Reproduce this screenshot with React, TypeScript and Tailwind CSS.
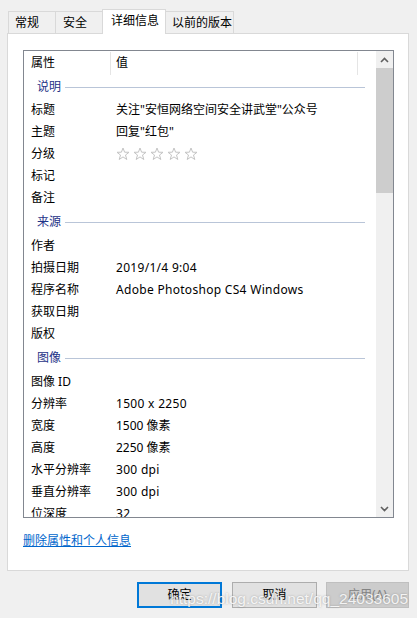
import React from 'react';

type Row =
  | { type: 'section'; label: string; h: string }
  | { type: 'item'; label: string; value?: string; stars?: boolean };

const rows: Row[] = [
  { type: 'section', label: '说明', h: 'h-[24px]' },
  { type: 'item', label: '标题', value: '关注"安恒网络空间安全讲武堂"公众号' },
  { type: 'item', label: '主题', value: '回复"红包"' },
  { type: 'item', label: '分级', stars: true },
  { type: 'item', label: '标记' },
  { type: 'item', label: '备注' },
  { type: 'section', label: '来源', h: 'h-[26px]' },
  { type: 'item', label: '作者' },
  { type: 'item', label: '拍摄日期', value: '2019/1/4 9:04' },
  { type: 'item', label: '程序名称', value: 'Adobe Photoshop CS4 Windows' },
  { type: 'item', label: '获取日期' },
  { type: 'item', label: '版权' },
  { type: 'section', label: '图像', h: 'h-[26px]' },
  { type: 'item', label: '图像 ID' },
  { type: 'item', label: '分辨率', value: '1500 x 2250' },
  { type: 'item', label: '宽度', value: '1500 像素' },
  { type: 'item', label: '高度', value: '2250 像素' },
  { type: 'item', label: '水平分辨率', value: '300 dpi' },
  { type: 'item', label: '垂直分辨率', value: '300 dpi' },
  { type: 'item', label: '位深度', value: '32' },
];

function Star() {
  return (
    <svg width="14" height="14" viewBox="0 0 14 14" className="shrink-0">
      <polygon
        points="7,1 8.6,5.2 13,5.3 9.5,8 10.8,12.5 7,9.9 3.2,12.5 4.5,8 1,5.3 5.4,5.2"
        fill="none"
        stroke="#c4c4c4"
        strokeWidth="1"
      />
    </svg>
  );
}

function Chevron({ up }: { up?: boolean }) {
  return (
    <svg width="9" height="6" viewBox="0 0 9 6">
      <polyline
        points={up ? '1,5 4.5,1.5 8,5' : '1,1 4.5,4.5 8,1'}
        fill="none"
        stroke="#606060"
        strokeWidth="1.6"
      />
    </svg>
  );
}

export default function App() {
  return (
    <div className="relative h-[618px] w-[417px] overflow-hidden bg-[#f0f0f0] px-[7px] pt-[9px] font-['Noto_Sans','Noto_Sans_CJK_SC',sans-serif] text-[12px] text-black">
      {/* tabs */}
      <div className="ml-[1px] flex h-[24px] items-end">
        <div className="h-[22px] w-[48px] border-x border-t border-[#d9d9d9] pl-[6px] leading-[21px]">常规</div>
        <div className="-ml-px h-[22px] w-[48px] border-x border-t border-[#d9d9d9] pl-[7px] leading-[21px]">安全</div>
        <div className="relative z-10 -mb-px -ml-px h-[25px] w-[64px] border-x border-t border-[#d9d9d9] bg-white pl-[8px] leading-[21px]">
          详细信息
        </div>
        <div className="-ml-px h-[22px] w-[69px] border-x border-t border-[#d9d9d9] pl-[6px] leading-[21px]">以前的版本</div>
      </div>

      {/* panel */}
      <div className="h-[538px] w-[402px] border border-[#d9d9d9] bg-white px-[15px] pt-[16px]">
        <div className="flex h-[468px] w-[371px] border border-[#828790]">
          <div className="h-full flex-1 overflow-hidden">
            <div className="flex h-[24px] items-center">
              <div className="w-[86px] pl-[7px]">属性</div>
              <div className="h-[23px] w-px bg-[#e5e5e5]" />
              <div className="w-[246px] pl-[5px]">值</div>
              <div className="h-[23px] w-px bg-[#e5e5e5]" />
            </div>
            {rows.map((r, i) =>
              r.type === 'section' ? (
                <div key={i} className={`flex ${r.h} items-center pl-[13px] pr-[11px]`}>
                  <span className="text-[#1e3287]">{r.label}</span>
                  <div className="ml-[4px] h-px flex-1 bg-[#b9c5d8]" />
                </div>
              ) : (
                <div key={i} className="flex h-[22px] items-center whitespace-nowrap">
                  <div className="w-[92px] pl-[7px]">{r.label}</div>
                  {r.stars ? (
                    <div className="flex gap-[3px]">
                      <Star />
                      <Star />
                      <Star />
                      <Star />
                      <Star />
                    </div>
                  ) : (
                    <div className={r.value && /^[\x00-\x7F]+$/.test(r.value) ? 'tracking-[0.3px]' : ''}>{r.value}</div>
                  )}
                </div>
              ),
            )}
          </div>
          {/* scrollbar */}
          <div className="flex h-full w-[17px] flex-col bg-[#f0f0f0]">
            <div className="flex h-[17px] items-center justify-center">
              <Chevron up />
            </div>
            <div className="h-[125px] bg-[#cdcdcd]" />
            <div className="flex-1" />
            <div className="flex h-[17px] items-center justify-center">
              <Chevron />
            </div>
          </div>
        </div>

        <div className="mt-[15px] leading-[16px]">
          <a className="text-[#0066cc] underline">删除属性和个人信息</a>
        </div>
      </div>

      {/* buttons */}
      <div className="mt-[11px] flex justify-end pr-px">
        <button className="h-[26px] w-[85px] border-2 border-[#0078d7] bg-[#e1e1e1]">确定</button>
        <button className="ml-[10px] h-[26px] w-[85px] border border-[#adadad] bg-[#e1e1e1]">取消</button>
        <button className="ml-[9px] h-[26px] w-[83px] border border-[#bfbfbf] bg-[#cccccc] text-[#838383]">应用(A)</button>
      </div>

      {/* watermark */}
      <div className="pointer-events-none absolute bottom-[8px] right-[9px] font-['Liberation_Sans',sans-serif] text-[15.5px] text-white/85 [text-shadow:0_0_2px_rgba(90,90,90,0.5)]">
        https://blog.csdn.net/qq_24033605
      </div>
    </div>
  );
}
